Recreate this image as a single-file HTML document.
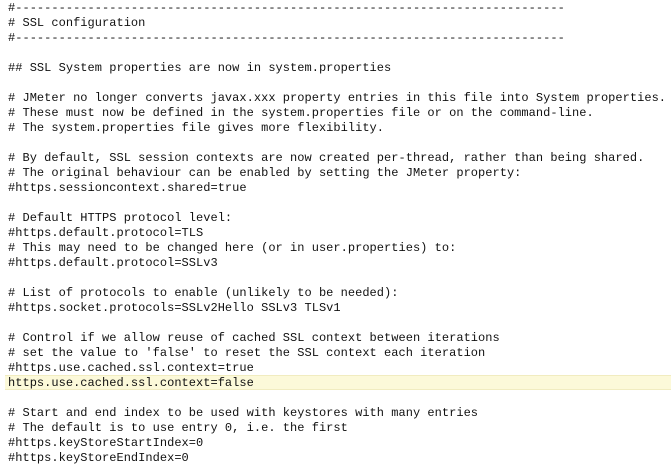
<html><head><style>
body{margin:0;background:#fff;width:671px;height:472px;overflow:hidden}
pre{margin:0;position:absolute;left:8px;top:0.5px;font:12px/15.03px "Liberation Mono",monospace;color:#111;letter-spacing:0.03px}
.hl{position:absolute;left:5px;right:0;top:374.5px;height:15px;background:#fcf9d9;border-top:1px solid #f1ecc0;border-bottom:1px solid #f1ecc0;box-sizing:border-box}
</style></head><body><div class="hl"></div><pre>#----------------------------------------------------------------------------
# SSL configuration
#----------------------------------------------------------------------------

## SSL System properties are now in system.properties

# JMeter no longer converts javax.xxx property entries in this file into System properties.
# These must now be defined in the system.properties file or on the command-line.
# The system.properties file gives more flexibility.

# By default, SSL session contexts are now created per-thread, rather than being shared.
# The original behaviour can be enabled by setting the JMeter property:
#https.sessioncontext.shared=true

# Default HTTPS protocol level:
#https.default.protocol=TLS
# This may need to be changed here (or in user.properties) to:
#https.default.protocol=SSLv3

# List of protocols to enable (unlikely to be needed):
#https.socket.protocols=SSLv2Hello SSLv3 TLSv1

# Control if we allow reuse of cached SSL context between iterations
# set the value to 'false' to reset the SSL context each iteration
#https.use.cached.ssl.context=true
https.use.cached.ssl.context=false

# Start and end index to be used with keystores with many entries
# The default is to use entry 0, i.e. the first
#https.keyStoreStartIndex=0
#https.keyStoreEndIndex=0</pre></body></html>
